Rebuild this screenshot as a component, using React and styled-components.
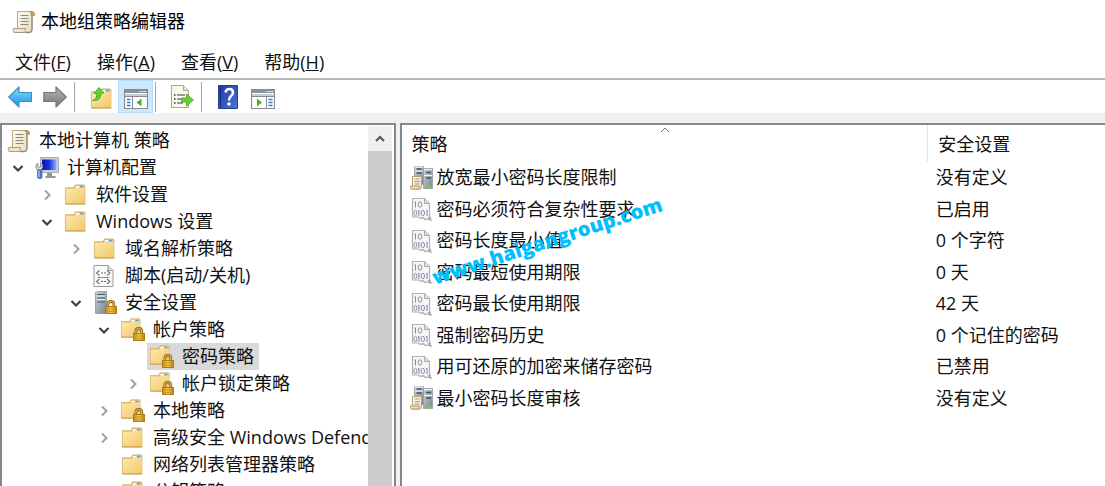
import React from 'react'
import styled, { createGlobalStyle } from 'styled-components'

const colors = {
  text: '#111',
  frame: '#828790',
  chrome: '#f0f0f0',
  selected: '#d9d9d9',
  active: '#cce8ff',
}

const GlobalStyle = createGlobalStyle`
  * {
    box-sizing: border-box;
  }

  body {
    margin: 0;
    background: #fff;
    color: ${colors.text};
    font-family: 'Open Sans', 'Noto Sans CJK SC', sans-serif;
    font-size: 18px;
    line-height: 27px;
  }

  button {
    margin: 0;
    padding: 0;
    border: 0;
    background: none;
    color: inherit;
    font: inherit;
  }
`

const Window = styled.div`
  display: flex;
  flex-direction: column;
  height: 100vh;
  overflow: hidden;
`

const TitleBar = styled.header`
  display: flex;
  align-items: center;
  gap: 5px;
  padding: 8px 12px;
  color: #000;
`

const Title = styled.h1`
  margin: 0;
  font-size: 18px;
  font-weight: 400;
`

const MenuBar = styled.nav`
  display: flex;
  gap: 26px;
  padding: 6px 15px 2px;
  border-bottom: 2px solid #b8b8b8;
`

const Toolbar = styled.div`
  display: flex;
  padding-left: 2px;
  background: #fff;
`

const ToolButton = styled.button`
  display: flex;
  align-items: center;
  justify-content: center;
  width: 35px;
  height: 33px;
  border: 1px solid ${({ $active }) => ($active ? '#b5dcfb' : 'transparent')};
  background: ${({ $active }) => ($active ? colors.active : 'none')};
`

const Separator = styled.span`
  width: 1px;
  margin: 2px 8px 1px 2px;
  background: #a5a5a5;
`

const Panes = styled.main`
  display: flex;
  flex: 1;
  gap: 4px;
  min-height: 0;
  padding-top: 10px;
  background: ${colors.chrome};
`

const TreePane = styled.section`
  display: flex;
  flex: 0 0 35.8%;
  min-width: 0;
  padding-right: 2px;
  border: 2px solid ${colors.frame};
  border-bottom: 0;
  background: #fff;
`

const Tree = styled.ul`
  flex: 1;
  min-width: 0;
  margin: 0;
  padding: 2px 0 0;
  overflow: hidden;
  list-style: none;
`

// left edge of every tree level
const indents = [2, 8, 37, 66, 94, 123]

const TreeRow = styled.li`
  display: flex;
  align-items: center;
  height: 27px;
  padding-left: ${({ $level }) => indents[$level]}px;
`

const Toggle = styled.button`
  display: flex;
  flex: none;
  align-items: center;
  justify-content: center;
  width: 16px;
  height: 16px;
  margin-right: 6px;
  visibility: ${({ $hidden }) => ($hidden ? 'hidden' : 'visible')};
`

const TreeItem = styled.button`
  display: flex;
  flex: none;
  align-items: center;
  gap: 8px;
  padding: 0 5px 0 3px;
  background: ${({ $selected }) => ($selected ? colors.selected : 'none')};
  white-space: nowrap;
`

const ScrollTrack = styled.div`
  flex: none;
  width: 24px;
  margin-top: 1px;
  background: #cdcdcd;
`

const ScrollButton = styled.button`
  display: flex;
  align-items: center;
  justify-content: center;
  width: 100%;
  height: 25px;
  background: ${colors.chrome};
`

const ListPane = styled.section`
  position: relative;
  flex: 1;
  min-width: 0;
  overflow: hidden;
  border: 2px solid ${colors.frame};
  border-width: 2px 0 0 2px;
  background: #fff;
`

const Table = styled.table`
  width: 100%;
  border-collapse: collapse;
  table-layout: fixed;
`

const HeadCell = styled.th`
  position: relative;
  width: ${({ $width }) => $width};
  height: 37px;
  padding: 2px 9px 0 10px;
  border-right: ${({ $divider }) => ($divider ? '1px solid #e5e5e5' : '0')};
  font-weight: 400;
  text-align: left;
`

const SortMark = styled.span`
  position: absolute;
  top: 1px;
  left: 50%;
  display: flex;
  margin-left: -3px;
`

const PolicyRow = styled.tr`
  height: 31px;

  &:nth-child(even) {
    height: 32px;
  }
`

const Cell = styled.td`
  padding: 0 8px;
  white-space: nowrap;
`

const PolicyName = styled.div`
  display: flex;
  align-items: center;
  gap: 3px;
`

const Watermark = styled.div`
  position: absolute;
  top: 102px;
  left: 25px;
  color: #00bfff;
  font-size: 20px;
  font-weight: 800;
  line-height: 28px;
  transform: rotate(-18deg);
  pointer-events: none;
`

const Icon = styled.svg`
  display: block;
  flex: none;
  width: ${({ $size }) => $size || 24}px;
  height: ${({ $size }) => $size || 24}px;
`

const HiddenDefs = styled.svg`
  position: absolute;
  width: 0;
  height: 0;
`

const Gradients = () => (
  <HiddenDefs aria-hidden="true">
    <defs>
      <linearGradient id="folder" x1="0" y1="0" x2="1" y2="1">
        <stop offset="0" stopColor="#ffe9ae" />
        <stop offset="1" stopColor="#f0c869" />
      </linearGradient>
      <linearGradient id="paper" x1="0" y1="0" x2="1" y2="1">
        <stop offset="0" stopColor="#fffdf3" />
        <stop offset="1" stopColor="#e9dbb5" />
      </linearGradient>
      <linearGradient id="blue" x1="0" y1="0" x2="0" y2="1">
        <stop offset="0" stopColor="#8edcff" />
        <stop offset="1" stopColor="#1594e4" />
      </linearGradient>
      <linearGradient id="gray" x1="0" y1="0" x2="0" y2="1">
        <stop offset="0" stopColor="#b5b5b5" />
        <stop offset="1" stopColor="#777" />
      </linearGradient>
      <linearGradient id="gold" x1="0" y1="0" x2="1" y2="0">
        <stop offset="0" stopColor="#c98d14" />
        <stop offset=".5" stopColor="#f3c84a" />
        <stop offset="1" stopColor="#b97d0c" />
      </linearGradient>
      <linearGradient id="steel" x1="0" y1="0" x2="1" y2="1">
        <stop offset="0" stopColor="#cbd3da" />
        <stop offset="1" stopColor="#77838f" />
      </linearGradient>
      <linearGradient id="screen" x1="0" y1="0" x2="1" y2="0">
        <stop offset="0" stopColor="#0512ae" />
        <stop offset=".5" stopColor="#1a32e2" />
        <stop offset="1" stopColor="#92b1ff" />
      </linearGradient>
      <linearGradient id="help" x1="0" y1="0" x2="1" y2="1">
        <stop offset="0" stopColor="#2038a4" />
        <stop offset="1" stopColor="#4774dc" />
      </linearGradient>
    </defs>
  </HiddenDefs>
)

const Scroll = () => (
  <>
    <path d="M5.500 1.500h14.500v17.500q0 3.500-3 3.500H5.500z" fill="url(#paper)" stroke="#bba982" />
    <path d="M18 1.500h3q2 1 1.500 4h-3.500q.5-2.500-1-4z" fill="#c39d63" stroke="#a58a5c" strokeWidth=".7" />
    <path d="M1.500 18.500h12q-1 2 .5 4h-12q-1.500-2-.5-4z" fill="#f1e4c6" stroke="#a89c85" />
    <path d="M20 6v13q0 3.500-3 3.500h-3" stroke="#8d8d8d" strokeWidth="1.300" fill="none" />
    <path d="M8.500 5.500h8M8.500 8.500h8M8.500 11.500h8M8.500 14.500h8" stroke="#8a8a8a" strokeWidth="1.200" />
  </>
)

const Folder = () => (
  <g transform="translate(0 .5) scale(.95)">
    <path d="M1.500 4.500h9l1.500-3h9q1 0 1 1v19h-20.500z" fill="#e5bb64" stroke="#d9b56b" />
    <path d="M12.500 2.500h8.500v2h-9z" fill="#fff" />
    <path d="M16.500 2.500h4v2h-4z" fill="#55a5de" />
    <path d="M2 5.500h9.500l1-1h9.500v16.500H2z" fill="url(#folder)" />
    <path d="M1.500 21.500h21" stroke="#c69a4a" />
  </g>
)

const Lock = () => (
  <>
    <path d="M14.800 16v-2.500q0-3 3-3t3 3v2.500" fill="none" stroke="#8e671d" strokeWidth="2.800" />
    <path d="M14.800 16v-2.500q0-3 3-3t3 3v2.500" fill="none" stroke="#dcb556" strokeWidth="1.200" />
    <rect x="12.500" y="15.500" width="11" height="7" fill="url(#gold)" stroke="#b07c14" />
    <path d="M13 18h10M13 20.500h10" stroke="#c99320" strokeWidth=".8" />
  </>
)

const LockedFolder = () => (
  <>
    <g transform="translate(-1 -1) scale(.96)">
      <Folder />
    </g>
    <Lock />
  </>
)

const Computer = () => (
  <>
    <path d="M5.500 1.500h18v15h-18z" fill="#cdd1d0" stroke="#a9afb0" />
    <path d="M7 3.500h14.500v10.500H7z" fill="url(#screen)" />
    <path d="M12 17h5v3h3.500v2h-10v-2H12z" fill="#8e969b" />
    <path d="M.8 11q0-3 2-4v4h3V7q2 1 2 4l-1.500 3H2.300z" fill="#dce1e4" stroke="#758089" strokeWidth=".8" />
    <rect x="2.500" y="13.500" width="4.500" height="9" rx="1.500" fill="#3d79b5" stroke="#737f8b" />
    <path d="M4 14.500v7" stroke="#b7e1ff" />
  </>
)

const Script = () => (
  <g transform="translate(-1.500 0)">
    <path d="M2.500 1.500h14l5 5v16h-19z" fill="#fafafa" stroke="#999" />
    <path d="M16.500 1.500v5h5" fill="#ddd" stroke="#999" />
    <path d="M8 6.500l-3 2.500 3 2.500M15.500 6.500l3 2.500-3 2.500M8 15l-3 2.500 3 2.500M15.500 15l3 2.500-3 2.500" fill="none" stroke="#777" strokeWidth="1.100" />
    <path d="M9.500 9h5M9.500 17.500h5" stroke="#666" strokeDasharray="2 1" />
    <path d="M6 13.500h12" stroke="#8286a8" />
  </g>
)

const Server = () => (
  <>
    <path d="M2.500 1.500l2-1h9v22h-11z" fill="url(#steel)" stroke="#8d969e" strokeWidth=".8" />
    <path d="M4 3.500h8M4 7h8M4 11h8" stroke="#4e5963" strokeWidth="1.200" />
    <path d="M4 5h8M4 8.500h8" stroke="#edf2f5" />
    <Lock />
  </>
)

const ServerPair = () => (
  <>
    <path d="M4.500 .5h9v18h-9z" fill="url(#steel)" stroke="#929ba3" strokeWidth=".8" />
    <path d="M13.500 2.500h9v20h-9z" fill="url(#steel)" stroke="#929ba3" strokeWidth=".8" />
    <path d="M5 1.200h8M5 5h8M14 3.500h8M14 9.500h8" stroke="#f3f6f8" strokeWidth="1.200" />
    <path d="M6.500 3h5M6.500 7h5M16 6.500h5M16 12h5" stroke="#4b5258" strokeWidth="1.300" />
    <path d="M2.500 10.500h9v10q0 2.500-2 2.500h-7z" fill="url(#paper)" stroke="#bd9f6c" />
    <path d="M.5 20h8.500v3H1q-1-1-.5-3z" fill="#f1dfb6" stroke="#a5875a" strokeWidth=".8" />
    <path d="M4.500 13h5M4.500 15.500h5M4.500 18h5" stroke="#a39a8b" />
    <circle cx="20" cy="20.500" r="1.600" fill="#5bea16" />
  </>
)

const Binary = () => (
  <g transform="translate(-1 0)">
    <path d="M3.500 1.500h12l5 5v12l1.500 4.500-3.500-1-2 .5-2.500-2-2.500 1-2-1.500H3.500z" fill="#f6f6f8" stroke="#b2b2b2" strokeWidth="1.200" />
    <path d="M15.500 1.500v5h5" fill="#ddd" stroke="#aaa" />
    <path d="M12 21q3-1 4 1l4.500 1-2-3h3l.5 3.500-5-1z" fill="#aaa" />
    <path d="M6.500 4.500v6M5.500 5h1M10 13v6M9 13.500h1M18 13v6M17 13.500h1" stroke="#8f8eaa" strokeWidth="1.100" />
    <ellipse cx="11" cy="7.500" rx="1.800" ry="2.700" fill="none" stroke="#8f8eaa" />
    <ellipse cx="6.500" cy="16" rx="1.500" ry="2.700" fill="none" stroke="#8f8eaa" />
    <ellipse cx="13.800" cy="16" rx="1.700" ry="2.700" fill="none" stroke="#8f8eaa" />
  </g>
)

const Back = () => (
  <path d="M.8 12L11 2v5.500h12.500v9H11V22z" fill="url(#blue)" stroke="#3f8fc2" strokeWidth="1.200" strokeLinejoin="round" />
)

const Forward = () => (
  <path d="M23.200 12L13 2v5.500H.8v9H13V22z" fill="url(#gray)" stroke="#777" strokeWidth="1.200" strokeLinejoin="round" />
)

const FolderUp = () => (
  <>
    <g transform="translate(1 2)">
      <Folder />
    </g>
    <path d="M3.500 15.500q4.500-1.500 4.500-7H5l5-6 5 5.500h-3q0 8.500-8.500 7.500z" fill="#61d62c" stroke="#3d9e1d" strokeWidth=".8" />
  </>
)

const ConsoleFrame = () => (
  <>
    <path d="M.5 4.500h23v19H.5z" fill="#fff" stroke="#868b92" strokeWidth="1.200" />
    <path d="M1 5h22v3H1z" fill="#8b929c" />
    <path d="M15.500 6.500h1.500M18 6.500h1.500M20.500 6.500H22" stroke="#fff" />
    <path d="M1 9h22v2H1z" fill="#c9ccd0" />
  </>
)

const TreeToggle = () => (
  <>
    <ConsoleFrame />
    <path d="M8.500 11.500v12M1 11.500h22" stroke="#868b92" />
    <path d="M3 14.500h3.500M3 17.500h3.500M3 20.500h3.500" stroke="#3b78c5" strokeWidth="1.400" />
    <path d="M17.500 13.500v8l-5-4z" fill="#44b52a" />
  </>
)

const ActionToggle = () => (
  <>
    <ConsoleFrame />
    <path d="M15.500 11.500v12M1 11.500h22" stroke="#868b92" />
    <path d="M17.500 14.500h4M17.500 17.500h4M17.500 20.500h4" stroke="#3b78c5" strokeWidth="1.400" />
    <path d="M6 13.500v8l5-4z" fill="#44b52a" />
  </>
)

const Export = () => (
  <>
    <path d="M1.500.5h12l5 5v17h-17z" fill="#fbf8e7" stroke="#aaa694" />
    <path d="M13.500.5v5h5" fill="#e6e2cd" stroke="#aaa694" />
    <path d="M4 10h1.500M4 14h1.500M4 18h1.500" stroke="#334" strokeWidth="1.400" />
    <path d="M7 10h8M7 14h5M7 18h6" stroke="#77779a" strokeWidth="1.400" />
    <path d="M11.500 13h5V9l7 6-7 6v-4h-5z" fill="#62cf37" stroke="#49a529" strokeWidth=".8" />
  </>
)

const Help = () => (
  <>
    <path d="M2.500.5h19v23h-19z" fill="url(#help)" stroke="#24418c" />
    <path d="M4.500 1v22" stroke="#182d80" />
    <path d="M9.500 7.500q.5-3.500 4-3.500t3.500 3.500q0 2-2 3.500t-2 4.500" fill="none" stroke="#fff" strokeWidth="2.500" />
    <circle cx="13" cy="19" r="1.700" fill="#fff" />
  </>
)

const Glyph = ({ drawing: Drawing, size }) => (
  <Icon viewBox="0 0 24 24" $size={size} aria-hidden="true">
    <Drawing />
  </Icon>
)

const Chevron = ({ open }) => (
  <Icon viewBox="0 0 16 16" $size={16} aria-hidden="true">
    {open ? (
      <path d="M3.500 6l4.500 4.500L12.500 6" fill="none" stroke="#404040" strokeWidth="2.200" />
    ) : (
      <path d="M6 3.500L10.500 8 6 12.500" fill="none" stroke="#a0a0a0" strokeWidth="2" />
    )}
  </Icon>
)

const menus = [
  ['文件', 'F'],
  ['操作', 'A'],
  ['查看', 'V'],
  ['帮助', 'H'],
]

const tools = [
  { label: '后退', icon: Back },
  { label: '前进', icon: Forward },
  null,
  { label: '上一级', icon: FolderUp },
  { label: '显示/隐藏控制台树', icon: TreeToggle, active: true },
  null,
  { label: '导出列表', icon: Export },
  null,
  { label: '帮助', icon: Help },
  { label: '显示/隐藏操作窗格', icon: ActionToggle },
]

const nodes = [
  { level: 0, label: '本地计算机 策略', icon: Scroll },
  { level: 1, label: '计算机配置', icon: Computer, open: true },
  { level: 2, label: '软件设置', icon: Folder, open: false },
  { level: 2, label: 'Windows 设置', icon: Folder, open: true },
  { level: 3, label: '域名解析策略', icon: Folder, open: false },
  { level: 3, label: '脚本(启动/关机)', icon: Script },
  { level: 3, label: '安全设置', icon: Server, open: true },
  { level: 4, label: '帐户策略', icon: LockedFolder, open: true },
  { level: 5, label: '密码策略', icon: LockedFolder, selected: true },
  { level: 5, label: '帐户锁定策略', icon: LockedFolder, open: false },
  { level: 4, label: '本地策略', icon: LockedFolder, open: false },
  { level: 4, label: '高级安全 Windows Defender', icon: Folder, open: false },
  { level: 4, label: '网络列表管理器策略', icon: Folder },
  { level: 4, label: '公钥策略', icon: Folder },
]

const policies = [
  ['放宽最小密码长度限制', '没有定义', ServerPair],
  ['密码必须符合复杂性要求', '已启用', Binary],
  ['密码长度最小值', '0 个字符', Binary],
  ['密码最短使用期限', '0 天', Binary],
  ['密码最长使用期限', '42 天', Binary],
  ['强制密码历史', '0 个记住的密码', Binary],
  ['用可还原的加密来储存密码', '已禁用', Binary],
  ['最小密码长度审核', '没有定义', ServerPair],
]

const App = () => {
  return (
    <Window>
      <GlobalStyle />
      <Gradients />
      <TitleBar>
        <Glyph drawing={Scroll} />
        <Title>本地组策略编辑器</Title>
      </TitleBar>
      <MenuBar>
        {menus.map(([name, key]) => (
          <button key={key} type="button">
            {name}(<u>{key}</u>)
          </button>
        ))}
      </MenuBar>
      <Toolbar role="toolbar">
        {tools.map((tool, i) =>
          tool ? (
            <ToolButton key={i} type="button" aria-label={tool.label} $active={tool.active}>
              <Glyph drawing={tool.icon} />
            </ToolButton>
          ) : (
            <Separator key={i} />
          )
        )}
      </Toolbar>
      <Panes>
        <TreePane>
          <Tree>
            {nodes.map(node => (
              <TreeRow key={node.label} $level={node.level}>
                {node.level > 0 && (
                  <Toggle
                    type="button"
                    aria-label={node.open ? '折叠' : '展开'}
                    $hidden={node.open === undefined}
                  >
                    <Chevron open={node.open} />
                  </Toggle>
                )}
                <TreeItem type="button" $selected={node.selected}>
                  <Glyph drawing={node.icon} />
                  {node.label}
                </TreeItem>
              </TreeRow>
            ))}
          </Tree>
          <ScrollTrack>
            <ScrollButton type="button" aria-label="向上滚动">
              <Icon viewBox="0 0 16 16" $size={16} aria-hidden="true">
                <path d="M4 10l4-4 4 4" fill="none" stroke="#555" strokeWidth="2" />
              </Icon>
            </ScrollButton>
          </ScrollTrack>
        </TreePane>
        <ListPane>
          <Table>
            <thead>
              <tr>
                <HeadCell $width="74.8%" $divider>
                  策略
                  <SortMark>
                    <Icon viewBox="0 0 8 8" $size={8} aria-hidden="true">
                      <path d="M0 6l4-4 4 4" fill="none" stroke="#777" />
                    </Icon>
                  </SortMark>
                </HeadCell>
                <HeadCell $width="25.2%">安全设置</HeadCell>
              </tr>
            </thead>
            <tbody>
              {policies.map(([name, value, icon]) => (
                <PolicyRow key={name}>
                  <Cell>
                    <PolicyName>
                      <Glyph drawing={icon} />
                      {name}
                    </PolicyName>
                  </Cell>
                  <Cell>{value}</Cell>
                </PolicyRow>
              ))}
            </tbody>
          </Table>
          <Watermark>www.haigangroup.com</Watermark>
        </ListPane>
      </Panes>
    </Window>
  )
}

export default App
